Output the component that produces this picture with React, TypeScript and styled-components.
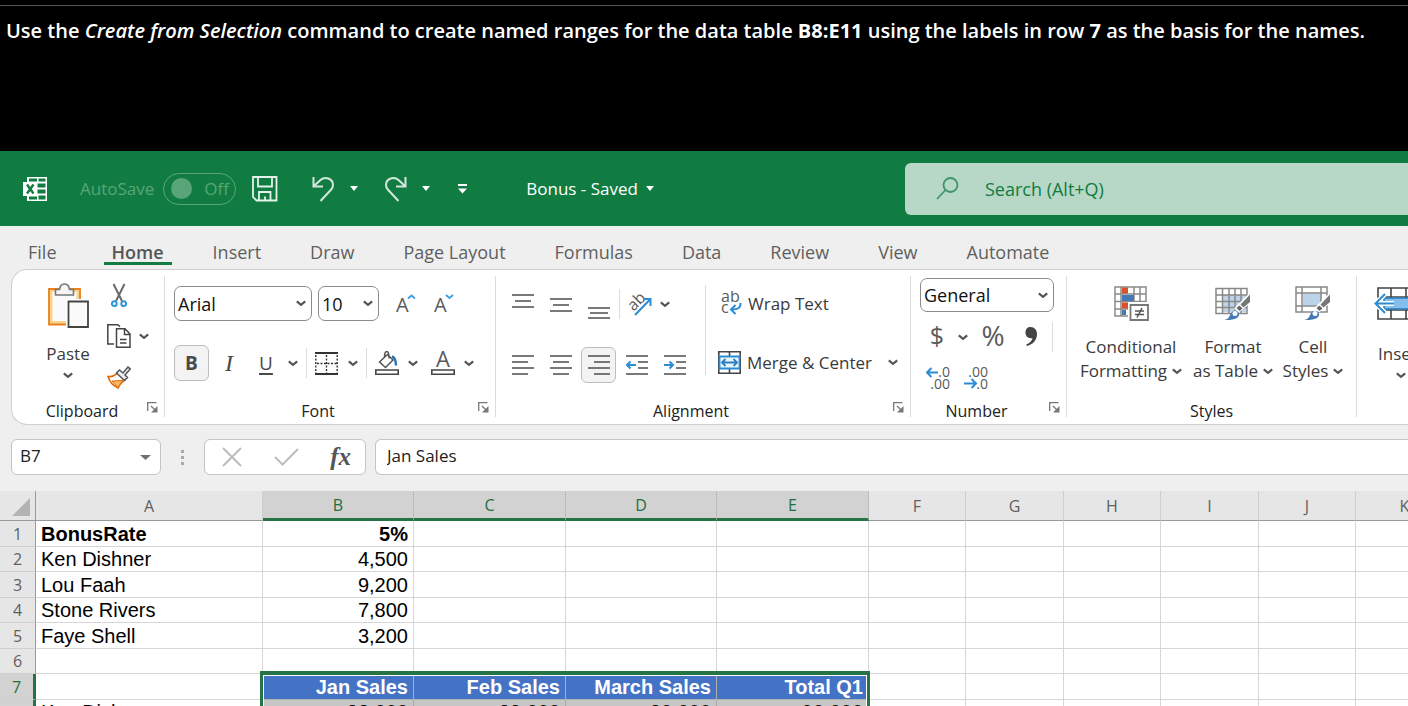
import React from "react";
import styled, { createGlobalStyle, css } from "styled-components";

const GlobalStyle = createGlobalStyle`
  *, *::before, *::after { box-sizing: border-box; }
  body { margin: 0; background: #000; font-family: "Open Sans", "Noto Sans", sans-serif; }
  button, input, select { font: inherit; color: inherit; margin: 0; padding: 0; border: 0; background: none; }
  button { cursor: pointer; }
  svg { display: block; flex: none; }
`;

/* ---------- page frame ---------- */

const Page = styled.div`
  display: flex;
  flex-direction: column;
  height: 100vh;
  overflow: hidden;
  background: #efefef;
`;

const Instruction = styled.header`
  flex: none;
  height: 151px;
  padding-top: 5px;
  background: #000;
  color: #fff;
`;

const InstructionText = styled.p`
  margin: 0;
  padding: 9px 6px;
  border-top: 1px solid #555;
  font-size: 20px;
  line-height: 32px;
  font-weight: 600;
  white-space: nowrap;
  strong { font-weight: 700; }
`;

/* ---------- title bar ---------- */

const TitleBar = styled.div`
  flex: none;
  display: flex;
  align-items: center;
  height: 75px;
  padding-left: 23px;
  background: #107c41;
  color: #fff;
  font-size: 17px;
  white-space: nowrap;
`;

const AutoSave = styled.label`
  display: flex;
  align-items: center;
  gap: 9px;
  margin-left: 33px;
  color: #58a57a;
`;

const Switch = styled.span`
  display: flex;
  align-items: center;
  gap: 12px;
  width: 73px;
  height: 32px;
  padding-left: 7px;
  border: 1px solid #58a57a;
  border-radius: 16px;
`;

const SwitchKnob = styled.input`
  appearance: none;
  width: 21px;
  height: 21px;
  border-radius: 50%;
  background: #58a57a;
`;

const TitleButton = styled.button<{ $gap: number }>`
  display: flex;
  align-items: center;
  margin-left: ${(p) => p.$gap}px;
`;

const FileName = styled(TitleButton)`
  gap: 8px;
`;

const TitleLeft = styled.div`
  display: flex;
  align-items: center;
  flex: none;
  width: 882px;
`;

const Search = styled.label`
  display: flex;
  align-items: center;
  flex: 1;
  min-width: 0;
  height: 52px;
  padding-left: 31px;
  gap: 26px;
  border-radius: 6px 0 0 6px;
  background: #b7d8c6;
  color: #107c41;
  font-size: 18px;
`;

const SearchInput = styled.input`
  flex: 1;
  min-width: 0;
  outline: 0;
  &::placeholder { color: #107c41; opacity: 1; }
`;

/* ---------- tabs ---------- */

const Tabs = styled.nav`
  flex: none;
  display: flex;
  gap: 33px;
  height: 43px;
  padding: 9px 0 0 20px;
  color: #5f5f5f;
  font-size: 18px;
  line-height: 34px;
  white-space: nowrap;
`;

const Tab = styled.a<{ $active?: boolean }>`
  height: 30px;
  padding: 0 8px;
  color: inherit;
  text-decoration: none;
  &:first-child { margin-right: 6px; }
  ${(p) => p.$active && css`
    font-weight: 600;
    color: #555;
    border-bottom: 3px solid #107c41;
  `}
`;

/* ---------- ribbon ---------- */

const Ribbon = styled.div`
  flex: none;
  display: flex;
  height: 156px;
  margin-left: 11px;
  padding: 6px 0 7px;
  overflow: hidden;
  border: 1px solid #cfcfcf;
  border-right: 0;
  border-radius: 16px 0 0 16px;
  background: #fff;
  color: #3a3a3a;
  font-size: 17px;
  white-space: nowrap;
`;

const Group = styled.section<{ $width: number }>`
  display: flex;
  flex-direction: column;
  flex: none;
  width: ${(p) => p.$width}px;
  border-right: 1px solid #dcdcdc;
`;

const GroupBody = styled.div<{ $pad: string }>`
  display: flex;
  flex: 1;
  min-height: 0;
  padding: ${(p) => p.$pad};
`;

const GroupFoot = styled.div<{ $lead?: number }>`
  display: flex;
  align-items: flex-start;
  height: 18px;
  padding-left: ${(p) => p.$lead ?? 0}px;
  color: #222;
  font-size: 16px;
  line-height: 24px;
  text-align: center;
`;

const GroupLabel = styled.span`
  flex: 1;
`;

const Launcher = styled.button`
  width: 24px;
  height: 18px;
  padding: 0 7px;
`;

const Column = styled.div<{ $gap?: number; $left?: number }>`
  display: flex;
  flex-direction: column;
  flex: none;
  gap: ${(p) => p.$gap ?? 0}px;
  margin-left: ${(p) => p.$left ?? 0}px;
`;

const Row = styled.div<{ $height: number; $gap?: number; $left?: number }>`
  display: flex;
  align-items: center;
  height: ${(p) => p.$height}px;
  gap: ${(p) => p.$gap ?? 0}px;
  padding-left: ${(p) => p.$left ?? 0}px;
`;

const Tool = styled.button<{ $w: number; $pressed?: boolean }>`
  display: flex;
  align-items: center;
  justify-content: center;
  flex: none;
  width: ${(p) => p.$w}px;
  height: 36px;
  border-radius: 6px;
  ${(p) => p.$pressed && css`
    border: 1px solid #bdbdbd;
    background: #f3f3f3;
  `}
`;

const Letter = styled.span<{ $kind: "bold" | "italic" | "underline" }>`
  font-size: 19px;
  line-height: 24px;
  color: #4a4a4a;
  ${(p) => p.$kind === "bold" && css`font-weight: 700;`}
  ${(p) => p.$kind === "italic" && css`font-family: "Liberation Serif", serif; font-style: italic; font-size: 24px;`}
  ${(p) => p.$kind === "underline" && css`text-decoration: underline; text-underline-offset: 3px; text-decoration-thickness: 2px;`}
`;

const LabelTool = styled.button`
  display: flex;
  align-items: center;
  height: 36px;
`;

const LabelText = styled.span`
  padding: 0 16px 0 6px;
`;

const WrapSlot = styled.span`
  padding-left: 3px;
`;

const Rule = styled.span<{ $height: number; $left: number; $right: number }>`
  flex: none;
  width: 1px;
  height: ${(p) => p.$height}px;
  margin: 0 ${(p) => p.$right}px 0 ${(p) => p.$left}px;
  background: #dcdcdc;
`;

const Dropdown = styled.div<{ $width: number; $height: number }>`
  display: grid;
  align-items: center;
  width: ${(p) => p.$width}px;
  height: ${(p) => p.$height}px;
  border: 1px solid #8a8a8a;
  border-radius: 7px;
  color: #111;
  font-size: 18px;
  & > * { grid-area: 1 / 1; }
  & > svg { justify-self: end; margin-right: 5px; pointer-events: none; }
`;

const Choice = styled.select`
  appearance: none;
  width: 100%;
  height: 100%;
  padding-left: 3px;
  outline: 0;
`;

const BigButton = styled.button<{ $width: number; $iconGap: number; $top?: number }>`
  display: flex;
  flex-direction: column;
  align-items: center;
  flex: none;
  width: ${(p) => p.$width}px;
  padding-top: ${(p) => p.$top ?? 0}px;
  line-height: 24px;
  & > svg:first-child { margin-bottom: ${(p) => p.$iconGap}px; }
`;

const CaptionLine = styled.span`
  display: flex;
  align-items: center;
  gap: 5px;
`;

const SoloCaption = styled.span`
  padding-bottom: 6px;
`;

/* ---------- formula bar ---------- */

const FormulaBar = styled.div`
  flex: none;
  display: flex;
  align-items: center;
  height: 66px;
  padding: 0 0 2px 11px;
  color: #222;
  font-size: 17px;
`;

const NameBox = styled.div`
  display: flex;
  align-items: center;
  width: 150px;
  height: 36px;
  padding: 0 9px 0 8px;
  border: 1px solid #c4c4c4;
  border-radius: 6px;
  background: #fff;
`;

const BarInput = styled.input`
  flex: 1;
  min-width: 0;
  padding-bottom: 3px;
  outline: 0;
`;

const DotHandle = styled.span`
  display: flex;
  justify-content: center;
  width: 43px;
`;

const FormulaButtons = styled.div`
  display: flex;
  align-items: center;
  justify-content: space-between;
  width: 162px;
  height: 36px;
  padding: 0 14px 0 17px;
  border: 1px solid #c4c4c4;
  border-radius: 6px;
  background: #fff;
`;

const Fx = styled.span`
  font-family: "Liberation Serif", serif;
  font-style: italic;
  font-weight: 700;
  font-size: 25px;
  line-height: 28px;
  color: #555;
`;

const FormulaField = styled.div`
  display: flex;
  flex: 1;
  min-width: 0;
  height: 36px;
  margin-left: 9px;
  padding-left: 11px;
  border: 1px solid #c4c4c4;
  border-right: 0;
  border-radius: 6px 0 0 6px;
  background: #fff;
`;

/* ---------- sheet ---------- */

const SheetView = styled.div`
  position: relative;
  flex: 1;
  min-height: 0;
  overflow: hidden;
  background: #fff;
`;

const Grid = styled.table`
  table-layout: fixed;
  width: 1454px;
  border-collapse: separate;
  border-spacing: 0;
  font-family: "Liberation Sans", Arial, sans-serif;
  font-size: 20px;
  line-height: 24px;
  color: #000;
`;

const Col = styled.col<{ $w: number }>`
  width: ${(p) => p.$w}px;
`;

const Line = styled.tr<{ $h: number }>`
  height: ${(p) => p.$h}px;
`;

const Corner = styled.td`
  padding: 0 5px 4px 0;
  border-right: 1px solid #999;
  border-bottom: 1px solid #999;
  background: #e6e6e6;
  vertical-align: bottom;
  & > svg { margin-left: auto; }
`;

const headFont = css`
  font-family: "Open Sans", "Noto Sans", sans-serif;
  font-size: 16px;
  font-weight: 400;
`;

const ColHead = styled.th<{ $on: boolean }>`
  padding: 0;
  border-right: 1px solid ${(p) => (p.$on ? "#bcbcbc" : "#cfcfcf")};
  border-bottom: ${(p) => (p.$on ? "3px solid #267346" : "1px solid #999")};
  background: ${(p) => (p.$on ? "#d2d2d2" : "#e6e6e6")};
  color: ${(p) => (p.$on ? "#1e6e42" : "#5f5f5f")};
  ${headFont}
`;

const RowHead = styled.th<{ $on: boolean }>`
  padding: 0;
  border-right: ${(p) => (p.$on ? "3px solid #267346" : "1px solid #999")};
  border-bottom: 1px solid #cfcfcf;
  background: ${(p) => (p.$on ? "#d2d2d2" : "#e6e6e6")};
  color: ${(p) => (p.$on ? "#1e6e42" : "#5f5f5f")};
  ${headFont}
`;

const Cell = styled.td<{ $look: "plain" | "bold" | "title" | "picked"; $right: boolean }>`
  padding: 0 5px;
  border-right: 1px solid #d6d6d6;
  border-bottom: 1px solid #d6d6d6;
  white-space: nowrap;
  text-align: ${(p) => (p.$right ? "right" : "left")};
  ${(p) => (p.$look === "bold" || p.$look === "title") && css`font-weight: 700;`}
  ${(p) => p.$look === "title" && css`
    background: #4472c4;
    color: #fff;
    border-color: #b0b0b0;
  `}
  ${(p) => p.$look === "picked" && css`
    background: #c6c6c6;
    border-color: #a8a8a8;
  `}
`;

/* green outline drawn over the selected range; its lower edge is below the fold */
const SelectionFrame = styled.div`
  position: absolute;
  top: 180px;
  left: 260px;
  width: 610px;
  height: 132px;
  border: 3px solid #267346;
  border-top-width: 4px;
  box-shadow: inset 0 0 0 1px #fff;
  pointer-events: none;
`;

/* ---------- icons ---------- */

const IconText = styled.text<{ $size: number }>`
  font-family: "Open Sans", "Noto Sans", sans-serif;
  font-size: ${(p) => p.$size}px;
  fill: #5a5a5a;
`;

const Chevron = () => (
  <svg width="10" height="7" viewBox="0 0 10 7" fill="none" stroke="#555" strokeWidth="2.200">
    <path d="M.8 1.400 5 4.800l4.200-3.400" />
  </svg>
);

const Caret = ({ w = 8, color = "#fff" }: { w?: number; color?: string }) => (
  <svg width={w} height="5" viewBox="0 0 8 5" preserveAspectRatio="none" fill={color}>
    <path d="M0 0h8L4 5z" />
  </svg>
);

const ExcelLogo = () => (
  <svg width="24" height="24" viewBox="0 0 24 24">
    <path d="M4 0h20v24H4z" fill="#fff" />
    <path d="M6 1.500h8v3H6zM15.500 1.500h7v3h-7zM14.500 6.500h8v4h-8zM14.500 12.500h8v4h-8zM15.500 18.500h7v4h-7zM6 19.500h8v3H6z" fill="#107c41" />
    <path d="M0 5h14v14H0z" fill="#fff" />
    <path d="m4 7.500 6.500 9M10.500 7.500l-6.500 9" stroke="#107c41" strokeWidth="2.400" />
  </svg>
);

const SaveIcon = () => (
  <svg width="26" height="26" viewBox="0 0 26 26" fill="none" stroke="#e4f2ea" strokeWidth="1.800">
    <path d="M1 1h23.500v23.500H4.500L1 21z" />
    <path d="M6 1v9.500h14V1M7 24.500V16h11.500v8.500M13 20.500v4" />
  </svg>
);

const UndoIcon = ({ flip = false }: { flip?: boolean }) => (
  <svg width="23" height="26" viewBox="0 0 23 26" fill="none" stroke="#d3e8dc" strokeWidth="2">
    <g transform={flip ? "translate(23 0) scale(-1 1)" : undefined}>
      <path d="M1.500 1v9.500H11M2 10 8.500 4C13-.2 21 2.500 21 9c0 2-.8 3.500-2 4.800L8.500 25" />
    </g>
  </svg>
);

const MoreIcon = () => (
  <svg width="9" height="10" viewBox="0 0 9 10" fill="#fff">
    <path d="M0 0h9v2H0zM0 4.500h9L4.500 9.500z" />
  </svg>
);

const SearchIcon = () => (
  <svg width="23" height="23" viewBox="0 0 23 23" fill="none" stroke="#3f946a" strokeWidth="1.800">
    <circle cx="14.500" cy="8" r="7" />
    <path d="M9.500 13 1 22" />
  </svg>
);

const PasteIcon = () => (
  <svg width="41" height="45" viewBox="0 0 41 45">
    <path d="M1 6h31v35.500H1z" fill="#fbd58f" stroke="#e8811a" strokeWidth="1.800" />
    <path d="M4.500 9h24v29h-24z" fill="#fafafa" />
    <path d="M7.500 12V6.500h4C12 2.500 13.500 1 16.500 1S21 2.500 21.500 6.500h4V12z" fill="#f5f5f5" stroke="#777" strokeWidth="1.600" />
    <path d="M18 16h23v29H18z" fill="#fff" />
    <path d="M20.500 18.500h19.500v25.500h-19.500z" fill="#fafafa" stroke="#444" strokeWidth="1.800" />
  </svg>
);

const CutIcon = () => (
  <svg width="16" height="25" viewBox="0 0 16 25" fill="none">
    <path d="m2.500 1 8.500 17M13.500 1 5 18" stroke="#6a6a6a" strokeWidth="2" />
    <circle cx="3.300" cy="20.700" r="2.400" stroke="#2f96dc" strokeWidth="2" />
    <circle cx="12.700" cy="20.700" r="2.400" stroke="#2f96dc" strokeWidth="2" />
  </svg>
);

const CopyIcon = () => (
  <svg width="24" height="24" viewBox="0 0 24 24" fill="none" stroke="#444" strokeWidth="1.500">
    <path d="M7 20H.8V.8H11l2 2" />
    <path d="M9.500 4.800h8.500l5 5.200v13.200H9.500zM17.500 5v5.500h5.500" fill="#fff" />
    <path d="M13 15.500h6.500M13 19h6.500" />
  </svg>
);

const BrushIcon = () => (
  <svg width="24" height="23" viewBox="0 0 24 23" fill="none">
    <path d="M1 10.500c4 .5 7-.5 9.500-4l7 7.500c-3 2-5 4.500-6.500 8C6 19.500 2.500 16 1 10.500z" fill="#fff" stroke="#e36c0a" strokeWidth="1.600" />
    <path d="m5 15 10.500-.5-4.500 7z" fill="#f8b86a" stroke="#e36c0a" />
    <path d="m9.500 7 3-3 3.500 3 5-6 2.300 2-5.300 6 2.500 2.500-3 3z" fill="#eee" stroke="#555" strokeWidth="1.500" />
  </svg>
);

const LaunchIcon = () => (
  <svg width="11" height="18" viewBox="0 0 11 18" fill="none" stroke="#777">
    <path d="M.700 12V3.700H9.500" strokeWidth="1.300" />
    <path d="m4 7 4 4" strokeWidth="1.300" />
    <path d="M10.500 7v6.500H4z" fill="#777" stroke="none" />
  </svg>
);

const FontSizeIcon = ({ down = false }: { down?: boolean }) => (
  <svg width="20" height="20" viewBox="0 0 20 20" fill="none">
    <IconText x="0" y="18" $size={20}>A</IconText>
    <path d={down ? "m12 1 3.500 3L19 1" : "m12 4.500 3.500-3 3.500 3"} stroke="#3fa0e0" strokeWidth="2" />
  </svg>
);

const BordersIcon = () => (
  <svg width="23" height="23" viewBox="0 0 23 23" fill="none" stroke="#333">
    <path d="M0 1h23M0 22h23" strokeWidth="2" />
    <path d="M.8 3v18M11.500 3v18M22.200 3v18M2 11.500h20" strokeWidth="1.400" strokeDasharray="2 1.500" />
  </svg>
);

const FillIcon = () => (
  <svg width="24" height="24" viewBox="0 0 24 24" fill="none">
    <path d="M4.500 11 12.500 3.500 18 9l-7.500 7.500zM9.500 6c0-4 1-5.500 2.500-5.500s2 1.500 2 7" stroke="#555" strokeWidth="1.500" />
    <path d="M17 5.500c3.500 1 4 4 4 9" stroke="#2472b8" strokeWidth="2.400" />
    <path d="M.8 19h22.400v4.200H.8z" fill="#fff" stroke="#444" strokeWidth="1.600" />
  </svg>
);

const FontColorIcon = () => (
  <svg width="24" height="24" viewBox="0 0 24 24" fill="none">
    <IconText x="12" y="16" $size={22} textAnchor="middle">A</IconText>
    <path d="M.8 19h22.400v4.200H.8z" fill="#fff" stroke="#444" strokeWidth="1.600" />
  </svg>
);

/* horizontal strokes, each given as [x1, x2, y] */
const Strokes = ({ h, rows }: { h: number; rows: number[][] }) => (
  <svg width="22" height={h} viewBox={`0 0 22 ${h}`} stroke="#4d4d4d" strokeWidth="1.700">
    {rows.map(([a, b, y]) => (
      <path key={y} d={`M${a} ${y}H${b}`} />
    ))}
  </svg>
);

const IndentIcon = ({ inward = false }: { inward?: boolean }) => (
  <svg width="22" height="22" viewBox="0 0 22 22" fill="none">
    <path d="M0 2h22M12 8h10M12 14h10M0 20h22" stroke="#4d4d4d" strokeWidth="1.700" />
    <path d={inward ? "M0 11h9M5.500 7.500 9 11l-3.500 3.500" : "M10 11H1M4.500 7.500 1 11l3.500 3.500"} stroke="#2a8dd4" strokeWidth="2" />
  </svg>
);

const OrientationIcon = () => (
  <svg width="25" height="24" viewBox="0 0 25 24" fill="none">
    <IconText x="-9" y="4" $size={16} textAnchor="middle" transform="translate(16 16) rotate(-45) translate(9 -8)">ab</IconText>
    <path d="M8 23 23 7.500M16.500 7H23.500v7" stroke="#2a8dd4" strokeWidth="2" />
  </svg>
);

const WrapIcon = () => (
  <svg width="21" height="24" viewBox="0 0 21 24" fill="none">
    <IconText x="0" y="11" $size={16}>ab</IconText>
    <IconText x="0" y="22" $size={16}>c</IconText>
    <path d="M19.500 12c.5 4-1.500 6.500-9 6.500M14.500 14l-4.500 4.500 4.500 4.500" stroke="#2a8dd4" strokeWidth="2" />
  </svg>
);

const MergeIcon = () => (
  <svg width="23" height="23" viewBox="0 0 23 23" fill="none">
    <path d="M.8.8h21.400v21.400H.8zM11.500 1v4M11.500 18v4" stroke="#444" strokeWidth="1.600" />
    <path d="M1.500 5.500h20v12h-20z" fill="#eaf5fc" stroke="#2a8dd4" strokeWidth="1.800" />
    <path d="M4 11.500h15M7.500 8 4 11.500 7.500 15M15.500 8l3.500 3.500-3.500 3.500" stroke="#2a7fc0" strokeWidth="1.800" />
  </svg>
);

const DollarIcon = () => (
  <svg width="16" height="26" viewBox="0 0 16 26">
    <IconText x="8" y="21" $size={25} textAnchor="middle">$</IconText>
  </svg>
);

const PercentIcon = () => (
  <svg width="26" height="26" viewBox="0 0 26 26">
    <IconText x="13" y="22" $size={28} textAnchor="middle">%</IconText>
  </svg>
);

const CommaIcon = () => (
  <svg width="12" height="20" viewBox="0 0 12 20" fill="#444">
    <path d="M5.500 0C9.500 0 12 3 12 7c0 6-4 10.500-10 12l-.8-1.500C5 16 7 14 7.500 11 3.500 12 .5 9.500.5 5.500.500 2 2.500 0 5.500 0z" />
  </svg>
);

const DecimalIcon = ({ fewer = false }: { fewer?: boolean }) => (
  <svg width="24" height="26" viewBox="0 0 24 26" fill="none">
    <IconText x="24" y="12" $size={14} textAnchor="end">{fewer ? ".00" : ".0"}</IconText>
    <IconText x="24" y="24" $size={14} textAnchor="end">{fewer ? ".0" : ".00"}</IconText>
    <path d={fewer ? "M0 18.500h12M7.500 14l4.500 4.500-4.500 4.500" : "M12 7.500H1M5.500 3 1 7.500 5.500 12"} stroke="#2a8dd4" strokeWidth="2" />
  </svg>
);

const ConditionalIcon = () => (
  <svg width="35" height="35" viewBox="0 0 35 35">
    <path d="M1 1h31v29H1zM1 8h31M1 15.500h31M1 23h31M7 1v29M20 1v29M26 1v14" fill="#fff" stroke="#8a8a8a" strokeWidth="1.500" />
    <path d="M8 1.500h6v6H8zM8 16.500h6v6H8z" fill="#d8502c" />
    <path d="M8 9h12v6H8zM8 24h4v5H8z" fill="#4479b3" />
    <path d="M14 16h21v19H14z" fill="#fff" />
    <path d="M16.500 19h17.500v15h-17.500z" fill="#fff" stroke="#777" strokeWidth="1.800" />
    <path d="M21 25h9M21 28.500h9M28 22l-5 9.500" stroke="#555" strokeWidth="1.500" />
  </svg>
);

const StyleBrush = () => (
  <g>
    <path d="M35.500 6v11L24 26.500l-5-4z" fill="#fff" />
    <path d="M35 8.500V16l-6.500 5.500-3-3z" fill="#777" />
    <path d="m24.500 19.500 3 3-3 2.500-3-3z" fill="#666" />
    <path d="M9 34c4-.5 5-2.500 6.500-6 2-4.500 7.500-4 8.500-.5 1 4-4 7-15 6.500z" fill="#4479b3" />
    <circle cx="20" cy="27.500" r="2.500" fill="#fff" />
  </g>
);

const FormatTableIcon = () => (
  <svg width="36" height="35" viewBox="0 0 36 35">
    <path d="M1 2.500h31v25H1z" fill="#fff" />
    <path d="M8 9h23v17H8z" fill="#bdd3ea" />
    <path d="M1 2.500h31v25H1zM1 9h31M1 15.500h31M1 21.500h31M7.500 2.500v25M14 2.500v25M20 2.500v25M26 2.500v25" fill="none" stroke="#888" strokeWidth="1.500" />
    <StyleBrush />
  </svg>
);

const CellStylesIcon = () => (
  <svg width="36" height="35" viewBox="0 0 36 35">
    <path d="M1 1h31v25H1z" fill="#fff" />
    <path d="M8 7.500h18v12H8z" fill="#bdd3ea" />
    <path d="M1 1h31v25H1zM1 7h31M1 20h31M7 1v25M26 1v19" fill="none" stroke="#888" strokeWidth="1.500" />
    <StyleBrush />
  </svg>
);

const InsertCellsIcon = () => (
  <svg width="54" height="35" viewBox="0 0 54 35">
    <path d="M4 2h46v31H4zM4 11h46M4 24h46M17 2v31M32 2v31" fill="#fff" stroke="#444" strokeWidth="1.600" />
    <path d="M10 12h40v11H10z" fill="#83beec" stroke="#2a7fc0" strokeWidth="1.600" />
    <path d="M20 17.500H2M11 8l-9.500 9.500L11 27" fill="none" stroke="#fff" strokeWidth="5" />
    <path d="M20 17.500H2M11 8l-9.500 9.500L11 27" fill="none" stroke="#2a8dd4" strokeWidth="2" />
  </svg>
);

const CrossIcon = () => (
  <svg width="20" height="20" viewBox="0 0 20 20" stroke="#bdbdbd" strokeWidth="2">
    <path d="m1 1 18 18M19 1 1 19" />
  </svg>
);

const CheckIcon = () => (
  <svg width="25" height="18" viewBox="0 0 25 18" fill="none" stroke="#bdbdbd" strokeWidth="2">
    <path d="m1 9 7.500 7.500L24 1" />
  </svg>
);

const DotsIcon = () => (
  <svg width="3" height="15" viewBox="0 0 3 15" fill="#a8a8a8">
    <path d="M0 0h3v3H0zM0 6h3v3H0zM0 12h3v3H0z" />
  </svg>
);

const CornerIcon = () => (
  <svg width="18" height="18" viewBox="0 0 18 18" fill="#b3b3b3">
    <path d="M18 0v18H0z" />
  </svg>
);

/* ---------- data ---------- */

const tabs = ["File", "Home", "Insert", "Draw", "Page Layout", "Formulas", "Data", "Review", "View", "Automate"];

const columns = [
  { name: "A", width: 227 },
  { name: "B", width: 151 },
  { name: "C", width: 152 },
  { name: "D", width: 151 },
  { name: "E", width: 152 },
  { name: "F", width: 97 },
  { name: "G", width: 98 },
  { name: "H", width: 97 },
  { name: "I", width: 98 },
  { name: "J", width: 97 },
  { name: "K", width: 98 },
];

const rows: string[][] = [
  ["BonusRate", "5%"],
  ["Ken Dishner", "4,500"],
  ["Lou Faah", "9,200"],
  ["Stone Rivers", "7,800"],
  ["Faye Shell", "3,200"],
  [],
  ["", "Jan Sales", "Feb Sales", "March Sales", "Total Q1"],
  ["Ken Dishner", "32,000", "29,000", "30,000", "90,000"],
];

const isPickedColumn = (c: number) => c >= 1 && c <= 4;

const lookOf = (r: number, c: number) => {
  if (r === 0) return "bold";
  if (r >= 6 && isPickedColumn(c)) return r === 6 ? "title" : "picked";
  return "plain";
};

/* ---------- shared pieces ---------- */

const Foot = ({ label, launcher = true, lead }: { label: string; launcher?: boolean; lead?: number }) => (
  <GroupFoot $lead={lead}>
    <GroupLabel>{label}</GroupLabel>
    {launcher && (
      <Launcher aria-label={`${label} settings`}>
        <LaunchIcon />
      </Launcher>
    )}
  </GroupFoot>
);

const Pick = ({ label, value, width, height }: { label: string; value: string; width: number; height: number }) => (
  <Dropdown $width={width} $height={height}>
    <Choice aria-label={label} defaultValue={value}>
      <option>{value}</option>
    </Choice>
    <Chevron />
  </Dropdown>
);

export default function App() {
  return (
    <Page>
      <GlobalStyle />
      <Instruction>
        <InstructionText>
          Use the <em>Create from Selection</em> command to create named ranges for the data table{" "}
          <strong>B8:E11</strong> using the labels in row <strong>7</strong> as the basis for the names.
        </InstructionText>
      </Instruction>

      <TitleBar>
        <TitleLeft>
          <ExcelLogo />
          <AutoSave>
            AutoSave
            <Switch>
              <SwitchKnob type="checkbox" role="switch" />
              Off
            </Switch>
          </AutoSave>
          <TitleButton $gap={16} aria-label="Save"><SaveIcon /></TitleButton>
          <TitleButton $gap={34} aria-label="Undo"><UndoIcon /></TitleButton>
          <TitleButton $gap={15} aria-label="Undo history"><Caret /></TitleButton>
          <TitleButton $gap={26} aria-label="Redo"><UndoIcon flip /></TitleButton>
          <TitleButton $gap={15} aria-label="Redo history"><Caret /></TitleButton>
          <TitleButton $gap={28} aria-label="Customize toolbar"><MoreIcon /></TitleButton>
          <FileName $gap={59}>Bonus - Saved <Caret /></FileName>
        </TitleLeft>
        <Search>
          <SearchIcon />
          <SearchInput type="search" aria-label="Search" placeholder="Search (Alt+Q)" />
        </Search>
      </TitleBar>

      <Tabs>
        {tabs.map((t) => (
          <Tab key={t} href="#" $active={t === "Home"}>{t}</Tab>
        ))}
      </Tabs>

      <Ribbon>
        <Group $width={153}>
          <GroupBody $pad="1px 0 0 26px">
            <BigButton $width={60} $iconGap={14} $top={6}>
              <PasteIcon />
              <SoloCaption>Paste</SoloCaption>
              <Chevron />
            </BigButton>
            <Column $gap={5} $left={6}>
              <Tool $w={30} aria-label="Cut"><CutIcon /></Tool>
              <Row $height={36}>
                <Tool $w={30} aria-label="Copy"><CopyIcon /></Tool>
                <Tool $w={20} aria-label="Copy options"><Chevron /></Tool>
              </Row>
              <Tool $w={30} aria-label="Format Painter"><BrushIcon /></Tool>
            </Column>
          </GroupBody>
          <Foot label="Clipboard" lead={12} />
        </Group>

        <Group $width={331}>
          <GroupBody $pad="10px 0 0 9px">
            <Column $gap={24}>
              <Row $height={35} $gap={6}>
                <Pick label="Font" value="Arial" width={138} height={35} />
                <Pick label="Font size" value="10" width={61} height={35} />
                <Row $height={35} $left={3} $gap={2}>
                  <Tool $w={36} aria-label="Increase font size"><FontSizeIcon /></Tool>
                  <Tool $w={36} aria-label="Decrease font size"><FontSizeIcon down /></Tool>
                </Row>
              </Row>
              <Row $height={36}>
                <Tool $w={35} $pressed aria-label="Bold"><Letter $kind="bold">B</Letter></Tool>
                <Tool $w={40} aria-label="Italic"><Letter $kind="italic">I</Letter></Tool>
                <Tool $w={34} aria-label="Underline"><Letter $kind="underline">U</Letter></Tool>
                <Tool $w={20} aria-label="Underline options"><Chevron /></Tool>
                <Rule $height={30} $left={3} $right={6} />
                <Tool $w={27} aria-label="Borders"><BordersIcon /></Tool>
                <Tool $w={26} aria-label="Border options"><Chevron /></Tool>
                <Rule $height={30} $left={0} $right={6} />
                <Tool $w={28} aria-label="Fill color"><FillIcon /></Tool>
                <Tool $w={24} aria-label="Fill options"><Chevron /></Tool>
                <Tool $w={36} aria-label="Font color"><FontColorIcon /></Tool>
                <Tool $w={15} aria-label="Font color options"><Chevron /></Tool>
              </Row>
            </Column>
          </GroupBody>
          <Foot label="Font" />
        </Group>

        <Group $width={415}>
          <GroupBody $pad="9px 0 0 9px">
            <Column $gap={23}>
              <Row $height={38} $gap={3}>
                <Tool $w={35} aria-label="Top align"><Strokes h={24} rows={[[0, 22, 3], [3, 19, 9], [0, 22, 15]]} /></Tool>
                <Tool $w={35} aria-label="Middle align"><Strokes h={24} rows={[[0, 22, 7], [3, 19, 13], [0, 22, 19]]} /></Tool>
                <Tool $w={35} aria-label="Bottom align"><Strokes h={32} rows={[[0, 22, 20], [2, 20, 25], [0, 22, 30]]} /></Tool>
                <Rule $height={30} $left={0} $right={1} />
                <Tool $w={30} aria-label="Orientation"><OrientationIcon /></Tool>
                <Tool $w={16} aria-label="Orientation options"><Chevron /></Tool>
              </Row>
              <Row $height={38} $gap={3}>
                <Tool $w={35} aria-label="Align left"><Strokes h={22} rows={[[0, 22, 2], [0, 16, 8], [0, 22, 14], [0, 16, 20]]} /></Tool>
                <Tool $w={35} aria-label="Center"><Strokes h={22} rows={[[0, 22, 2], [3, 19, 8], [0, 22, 14], [3, 19, 20]]} /></Tool>
                <Tool $w={35} $pressed aria-label="Align right"><Strokes h={22} rows={[[0, 22, 2], [6, 22, 8], [0, 22, 14], [6, 22, 20]]} /></Tool>
                <Tool $w={35} aria-label="Decrease indent"><IndentIcon /></Tool>
                <Tool $w={35} aria-label="Increase indent"><IndentIcon inward /></Tool>
              </Row>
            </Column>
            <Rule $height={90} $left={13} $right={12} />
            <Column $gap={23}>
              <LabelTool><WrapSlot><WrapIcon /></WrapSlot><LabelText>Wrap Text</LabelText></LabelTool>
              <LabelTool><MergeIcon /><LabelText>Merge &amp; Center</LabelText><Chevron /></LabelTool>
            </Column>
          </GroupBody>
          <Foot label="Alignment" />
        </Group>

        <Group $width={156}>
          <GroupBody $pad="2px 0 0 9px">
            <Column>
              <Pick label="Number format" value="General" width={134} height={34} />
              <Row $height={50}>
                <Tool $w={34} aria-label="Currency"><DollarIcon /></Tool>
                <Tool $w={18} aria-label="Currency options"><Chevron /></Tool>
                <Tool $w={42} aria-label="Percent"><PercentIcon /></Tool>
                <Tool $w={34} aria-label="Comma style"><CommaIcon /></Tool>
                <Rule $height={30} $left={4} $right={0} />
              </Row>
              <Row $height={32}>
                <Tool $w={35} aria-label="Increase decimal"><DecimalIcon /></Tool>
                <Tool $w={42} aria-label="Decrease decimal"><DecimalIcon fewer /></Tool>
              </Row>
            </Column>
          </GroupBody>
          <Foot label="Number" />
        </Group>

        <Group $width={290}>
          <GroupBody $pad="10px 0 0 7px">
            <BigButton $width={114} $iconGap={14}>
              <ConditionalIcon />
              <CaptionLine>Conditional</CaptionLine>
              <CaptionLine>Formatting <Chevron /></CaptionLine>
            </BigButton>
            <BigButton $width={90} $iconGap={14}>
              <FormatTableIcon />
              <CaptionLine>Format</CaptionLine>
              <CaptionLine>as Table <Chevron /></CaptionLine>
            </BigButton>
            <BigButton $width={70} $iconGap={14}>
              <CellStylesIcon />
              <CaptionLine>Cell</CaptionLine>
              <CaptionLine>Styles <Chevron /></CaptionLine>
            </BigButton>
          </GroupBody>
          <Foot label="Styles" launcher={false} />
        </Group>

        <Group $width={200}>
          <GroupBody $pad="10px 0 0 16px">
            <BigButton $width={56} $iconGap={21}>
              <InsertCellsIcon />
              <SoloCaption>Insert</SoloCaption>
              <Chevron />
            </BigButton>
          </GroupBody>
        </Group>
      </Ribbon>

      <FormulaBar>
        <NameBox>
          <BarInput aria-label="Name box" defaultValue="B7" />
          <Caret w={11} color="#707070" />
        </NameBox>
        <DotHandle><DotsIcon /></DotHandle>
        <FormulaButtons>
          <button aria-label="Cancel"><CrossIcon /></button>
          <button aria-label="Enter"><CheckIcon /></button>
          <button aria-label="Insert function"><Fx>fx</Fx></button>
        </FormulaButtons>
        <FormulaField>
          <BarInput aria-label="Formula" defaultValue="Jan Sales" />
        </FormulaField>
      </FormulaBar>

      <SheetView>
        <Grid>
          <colgroup>
            <Col $w={36} />
            {columns.map((c) => <Col key={c.name} $w={c.width} />)}
          </colgroup>
          <thead>
            <Line $h={30}>
              <Corner><CornerIcon /></Corner>
              {columns.map((c, i) => (
                <ColHead key={c.name} scope="col" $on={isPickedColumn(i)}>{c.name}</ColHead>
              ))}
            </Line>
          </thead>
          <tbody>
            {rows.map((cells, r) => (
              <Line key={r} $h={r % 2 === 0 ? 26 : 25}>
                <RowHead scope="row" $on={r >= 6}>{r + 1}</RowHead>
                {columns.map((c, i) => (
                  <Cell key={c.name} $look={lookOf(r, i)} $right={i > 0}>{cells[i]}</Cell>
                ))}
              </Line>
            ))}
          </tbody>
        </Grid>
        <SelectionFrame />
      </SheetView>
    </Page>
  );
}
